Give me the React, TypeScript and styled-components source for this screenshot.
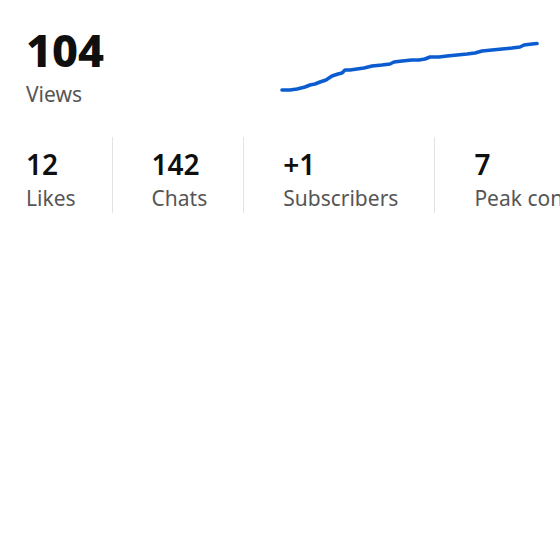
import styled, { createGlobalStyle } from "styled-components";

const GlobalStyle = createGlobalStyle`
  body {
    margin: 0;
    background: #fff;
    font-family: "Noto Sans", Roboto, sans-serif;
  }
`;

const Page = styled.div`
  padding: 27px 0 0 26px;
  width: 560px;
  height: 560px;
  box-sizing: border-box;
  overflow: hidden;
`;

const Header = styled.div`
  display: flex;
  align-items: flex-start;
`;

const Headline = styled.div`
  width: 254px;
  display: flex;
  flex-direction: column;
`;

const BigNumber = styled.div`
  font-size: 45px;
  line-height: 46px;
  font-weight: 800;
  color: #0f0f0f;
`;

const BigLabel = styled.div`
  margin-top: 8px;
  font-size: 21px;
  line-height: 26px;
  color: #565656;
`;

const Chart = styled.svg`
  margin-top: 14px;
  width: 260px;
  height: 56px;
  display: block;
`;

const Stats = styled.div`
  display: flex;
  margin-top: 30px;
  white-space: nowrap;
`;

const Stat = styled.div<{ $first?: boolean }>`
  display: flex;
  flex-direction: column;
  padding: 10px 36px 2px 39px;
  padding-left: ${(p) => (p.$first ? "0" : "39px")};
  border-left: ${(p) => (p.$first ? "none" : "1px solid #e3e3e3")};
`;

const StatValue = styled.div`
  font-size: 28px;
  line-height: 34px;
  font-weight: 600;
  color: #0f0f0f;
`;

const StatLabel = styled.div`
  margin-top: 4px;
  font-size: 21px;
  line-height: 26px;
  color: #565656;
`;

const points: [number, number][] = [
  [0, 48], [8, 48], [15, 47], [23, 45], [28, 43], [33, 42], [38, 40],
  [44, 38], [50, 34], [56, 32], [60, 31], [63, 28], [68, 28], [75, 27],
  [82, 26], [90, 24], [100, 23], [108, 22], [112, 20], [120, 19],
  [130, 18], [137, 18], [143, 17], [148, 15], [157, 15], [165, 14],
  [175, 13], [185, 12], [193, 11], [200, 9], [210, 8], [220, 7],
  [230, 6], [238, 5], [242, 3], [250, 2], [255, 1.5],
];

const stats = [
  { value: "12", label: "Likes" },
  { value: "142", label: "Chats" },
  { value: "+1", label: "Subscribers" },
  { value: "7", label: "Peak concurrent viewers" },
];

export default function App() {
  const d = points.map(([x, y], i) => `${i ? "L" : "M"}${x + 2} ${y + 1}`).join(" ");
  return (
    <>
      <GlobalStyle />
      <Page>
        <Header>
          <Headline>
            <BigNumber>104</BigNumber>
            <BigLabel>Views</BigLabel>
          </Headline>
          <Chart viewBox="0 0 260 56">
            <path
              d={d}
              fill="none"
              stroke="#0b5cd0"
              strokeWidth={3.6}
              strokeLinecap="round"
              strokeLinejoin="round"
            />
          </Chart>
        </Header>
        <Stats>
          {stats.map((s, i) => (
            <Stat key={s.label} $first={i === 0}>
              <StatValue>{s.value}</StatValue>
              <StatLabel>{s.label}</StatLabel>
            </Stat>
          ))}
        </Stats>
      </Page>
    </>
  );
}
